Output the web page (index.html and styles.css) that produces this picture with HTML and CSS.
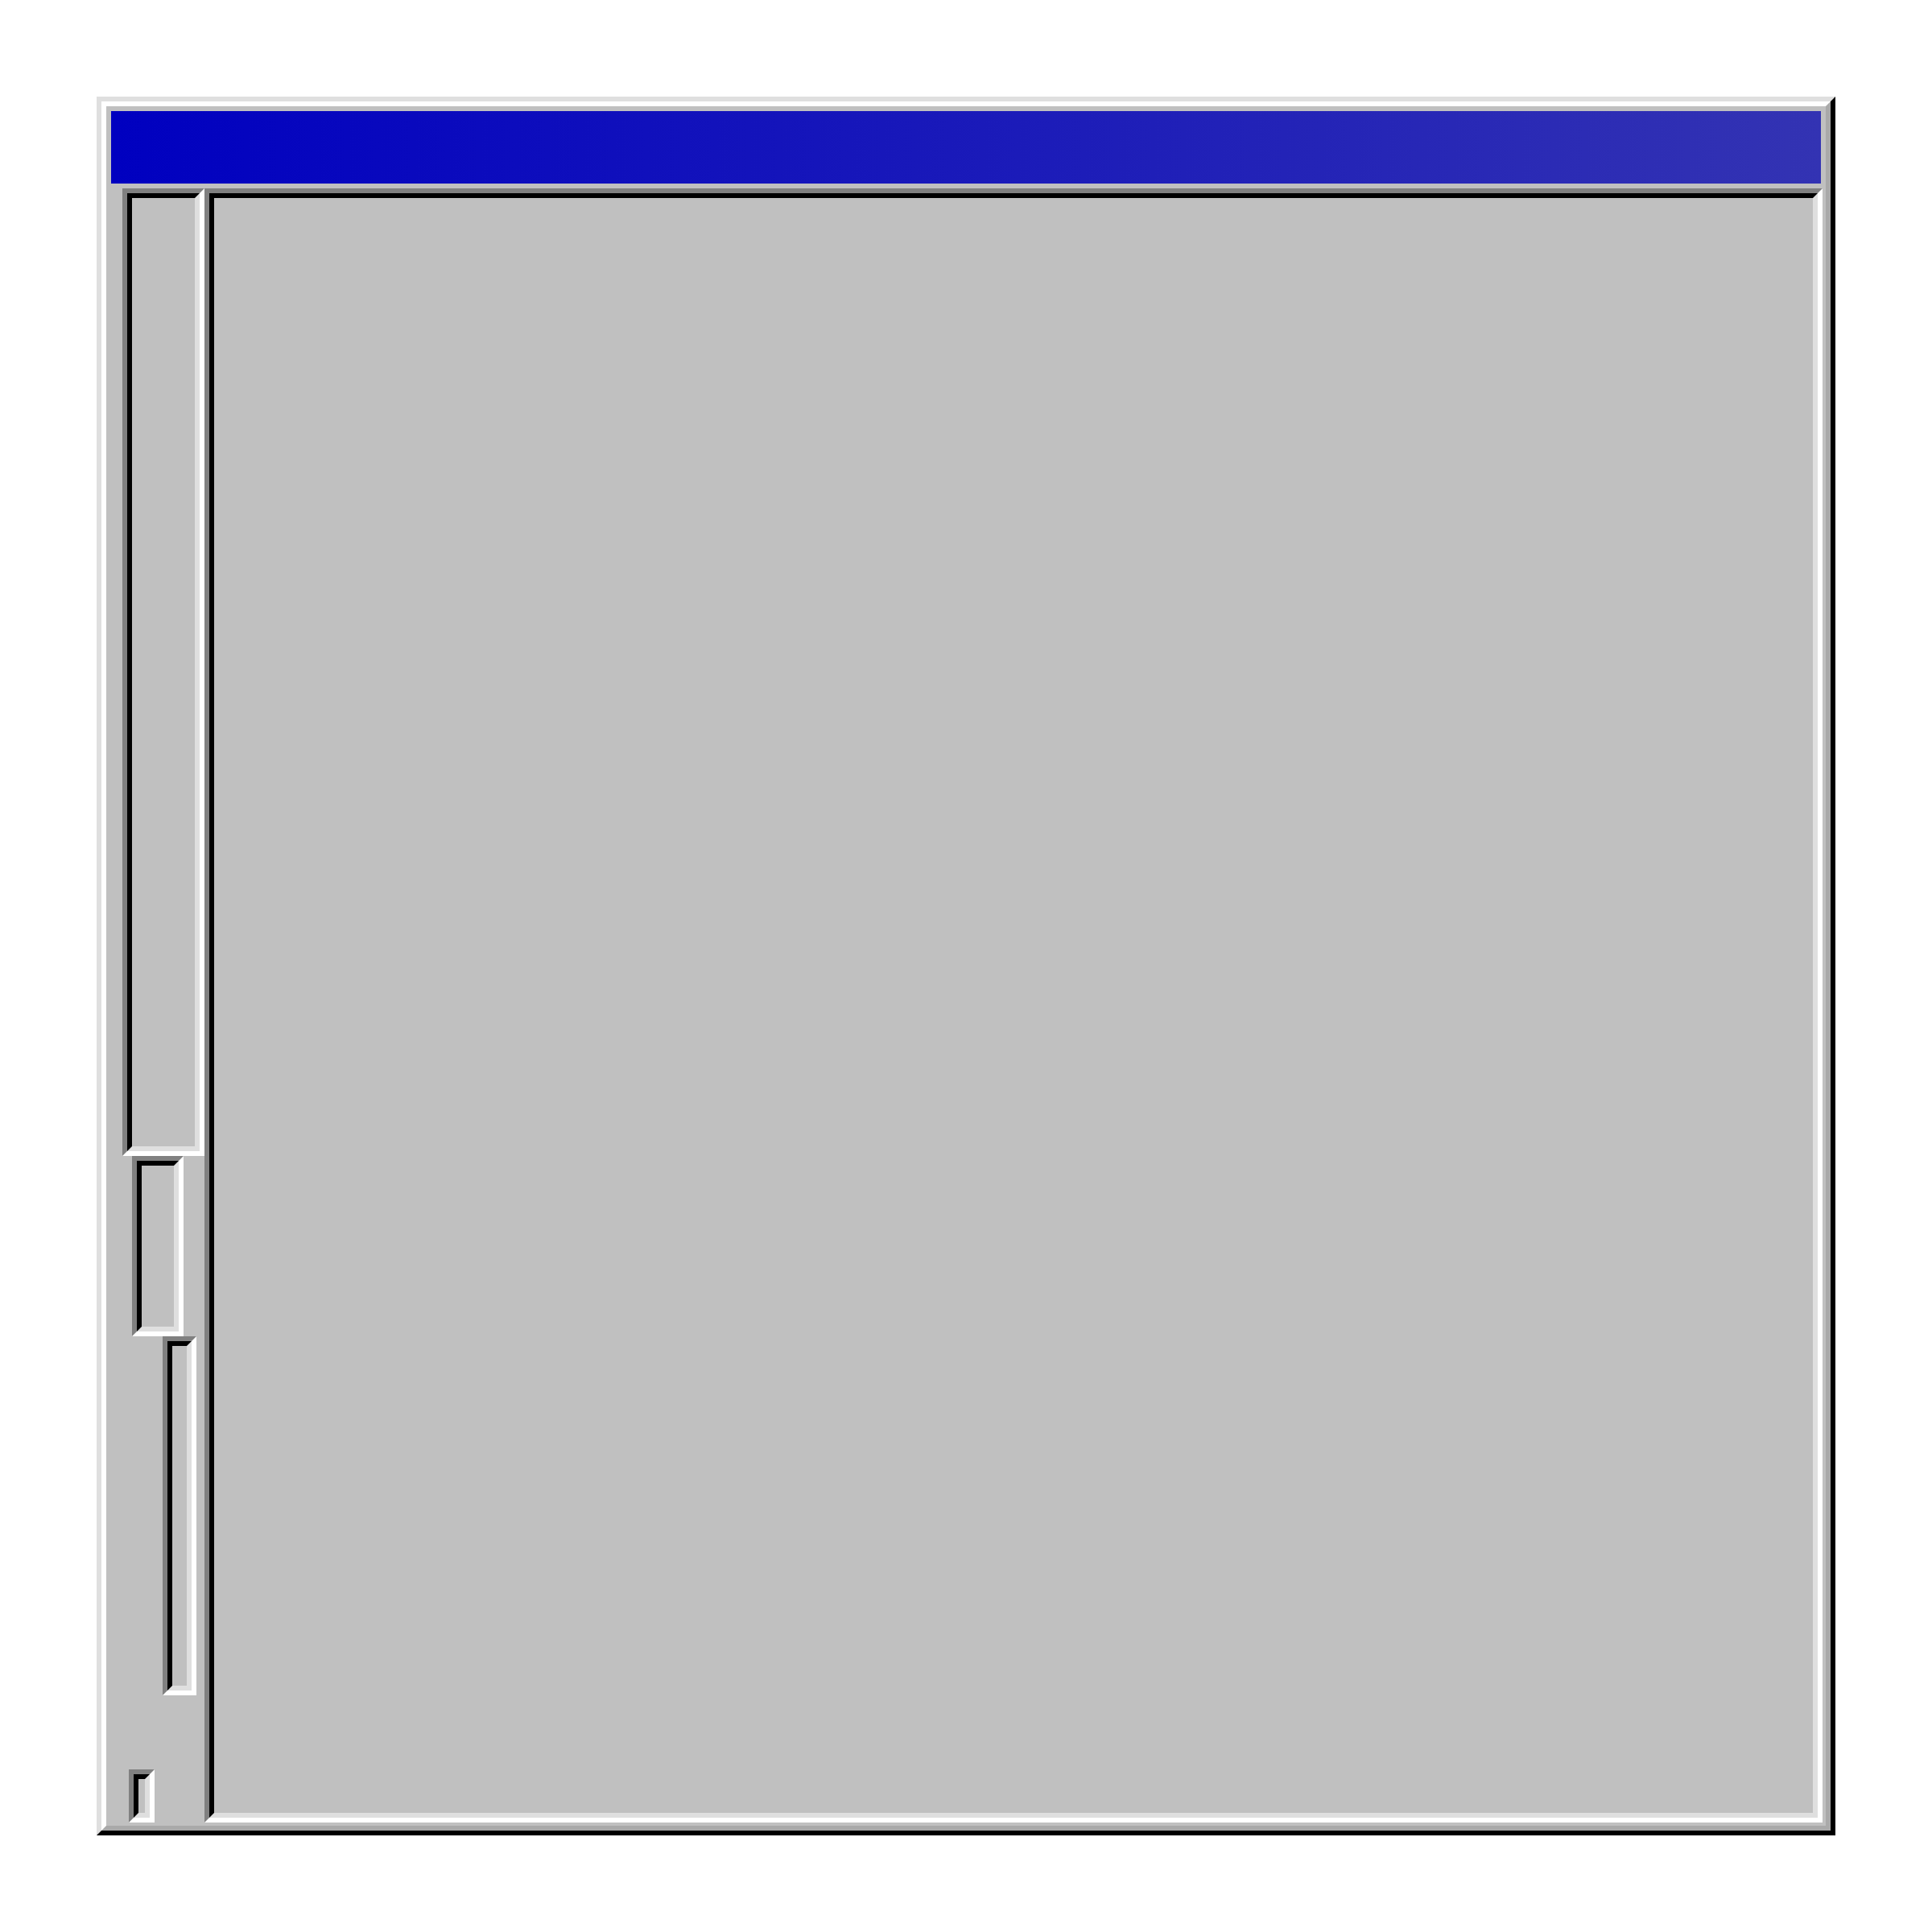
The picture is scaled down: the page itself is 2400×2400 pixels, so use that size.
FILE: index.html
```html
<!DOCTYPE html>
<html>
<head>
<meta charset="utf-8">
<link rel="stylesheet" href="styles.css">
</head>
<body>
<div class="window">
  <div class="window-inner">
    <div class="titlebar"></div>
    <div class="body">
      <div class="sidebar">
        <div class="inset p1"><div class="inset-in"></div></div>
        <div class="inset p2"><div class="inset-in"></div></div>
        <div class="inset p3"><div class="inset-in"></div></div>
        <div class="inset p4"><div class="inset-in"></div></div>
      </div>
      <div class="inset main"><div class="inset-in"></div></div>
    </div>
  </div>
</div>
</body>
</html>
```

FILE: styles.css
```css
html, body {
  margin: 0;
  padding: 0;
  background: #ffffff;
}

body {
  width: 2400px;
  height: 2400px;
  padding-top: 120px;
  box-sizing: border-box;
}

.window {
  margin-left: 120px;
  width: 2160px;
  height: 2160px;
  box-sizing: border-box;
  border-style: solid;
  border-width: 6px;
  border-color: #dfdfdf #000000 #000000 #dfdfdf;
  background: #c0c0c0;
}

.window-inner {
  height: 100%;
  box-sizing: border-box;
  border-style: solid;
  border-width: 6px;
  border-color: #ffffff #a9a9a9 #a9a9a9 #ffffff;
  padding: 6px 4px 4px 6px;
  display: flex;
  flex-direction: column;
  gap: 6px;
}

.titlebar {
  height: 90px;
  margin-right: 2px;
  flex: none;
  background: linear-gradient(to right, #0000c0, #3333b3);
}

.body {
  flex: 1;
  display: flex;
  min-height: 0;
}

.sidebar {
  width: 116px;
  flex: none;
  display: flex;
  flex-direction: column;
  align-items: flex-start;
}

.inset {
  box-sizing: border-box;
  border-style: solid;
  border-width: 6px;
  border-color: #808080 #ffffff #ffffff #808080;
  display: flex;
}

.inset-in {
  flex: 1;
  border-style: solid;
  border-width: 6px;
  border-color: #000000 #dfdfdf #dfdfdf #000000;
  background: #c0c0c0;
}

.p1 {
  margin-left: 14px;
  width: 102px;
  height: 1202px;
}

.p2 {
  margin-left: 26px;
  width: 64px;
  height: 224px;
}

.p3 {
  margin-left: 64px;
  width: 42px;
  height: 446px;
}

.p4 {
  margin-top: auto;
  margin-left: 22px;
  width: 32px;
  height: 66px;
}

.main {
  flex: 1;
}
```
